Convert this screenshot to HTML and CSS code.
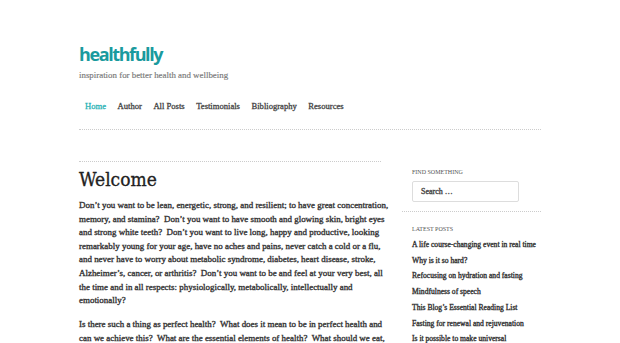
FILE: index.html
```html
<!DOCTYPE html>
<html>
<head>
<meta charset="utf-8">
<link rel="stylesheet" href="styles.css">
</head>
<body>
<div class="page">
  <header class="masthead">
    <div class="site-title">healthfully</div>
    <div class="tagline">inspiration for better health and wellbeing</div>
    <nav class="nav">
      <a class="current">Home</a>
      <a>Author</a>
      <a>All Posts</a>
      <a>Testimonials</a>
      <a>Bibliography</a>
      <a>Resources</a>
    </nav>
  </header>
  <div class="columns">
    <main class="main">
      <h1 class="entry-title">Welcome</h1>
      <p>Don’t you want to be lean, energetic, strong, and resilient; to have great concentration,<br>memory, and stamina?&nbsp; Don’t you want to have smooth and glowing skin, bright eyes<br>and strong white teeth?&nbsp; Don’t you want to live long, happy and productive, looking<br>remarkably young for your age, have no aches and pains, never catch a cold or a flu,<br>and never have to worry about metabolic syndrome, diabetes, heart disease, stroke,<br>Alzheimer’s, cancer, or arthritis?&nbsp; Don’t you want to be and feel at your very best, all<br>the time and in all respects: physiologically, metabolically, intellectually and<br>emotionally?</p>
      <p>Is there such a thing as perfect health?&nbsp; What does it mean to be in perfect health and<br>can we achieve this?&nbsp; What are the essential elements of health?&nbsp; What should we eat,</p>
    </main>
    <aside class="sidebar">
      <section class="widget">
        <h2 class="widget-title">Find Something</h2>
        <div class="search">Search …</div>
      </section>
      <section class="widget">
        <h2 class="widget-title">Latest Posts</h2>
        <ul class="posts">
          <li>A life course-changing event in real time</li>
          <li>Why is it so hard?</li>
          <li>Refocusing on hydration and fasting</li>
          <li>Mindfulness of speech</li>
          <li>This Blog’s Essential Reading List</li>
          <li>Fasting for renewal and rejuvenation</li>
          <li>Is it possible to make universal</li>
        </ul>
      </section>
    </aside>
  </div>
</div>
</body>
</html>
```

FILE: styles.css
```css
html, body {
  margin: 0;
  padding: 0;
  background: #fff;
}
body {
  font-family: "Liberation Serif", "Times New Roman", serif;
  color: #333;
  overflow: hidden;
  height: 343px;
}
.page {
  width: 462px;
  margin-left: 79px;
}
.masthead {
  padding-top: 42px;
  border-bottom: 1px dotted #ccc;
  padding-bottom: 17px;
}
.site-title {
  font-family: "Open Sans", sans-serif;
  font-weight: 700;
  font-size: 18px;
  line-height: 24px;
  color: #1a9a9e;
  letter-spacing: -1.4px;
}
.tagline {
  margin-top: 3px;
  font-size: 8.9px;
  line-height: 12px;
  color: #777;
  -webkit-text-stroke: 0.15px #777;
}
.nav {
  display: flex;
  gap: 11.5px;
  margin-top: 19px;
  padding-left: 6px;
  font-size: 8.6px;
  line-height: 12px;
  -webkit-text-stroke: 0.3px #444;
}
.nav a {
  color: #444;
}
.nav a.current {
  color: #2bb3b6;
  -webkit-text-stroke: 0.3px #2bb3b6;
}
.columns {
  display: flex;
  gap: 21px;
  margin-top: 31px;
}
.main {
  width: 302px;
  border-top: 1px dotted #ccc;
}
.entry-title {
  font-family: "DejaVu Serif Condensed", "DejaVu Serif", serif;
  font-weight: 400;
  font-size: 19px;
  line-height: 24px;
  margin: 5px 0 8px;
  color: #222;
  -webkit-text-stroke: 0.3px #222;
}
.main p {
  margin: 0 0 10.4px;
  font-size: 8.95px;
  line-height: 13.6px;
  color: #333;
  white-space: nowrap;
  -webkit-text-stroke: 0.35px #333;
}
.sidebar {
  width: 139px;
}
.widget {
  padding-left: 10px;
}
.widget + .widget {
  border-top: 1px dotted #ccc;
  margin-top: 9px;
}
.widget-title {
  margin: 6px 0 0;
  font-size: 6px;
  line-height: 10px;
  font-weight: 400;
  text-transform: uppercase;
  color: #555;
}
.search {
  margin-top: 4px;
  width: 97px;
  height: 19px;
  border: 1px solid #ddd;
  border-radius: 2px;
  padding-left: 8px;
  font-size: 8px;
  line-height: 19px;
  color: #444;
  -webkit-text-stroke: 0.35px #444;
}
.posts {
  list-style: none;
  margin: 3px 0 0;
  padding: 0;
}
.posts li {
  font-size: 7.6px;
  line-height: 15.7px;
  color: #333;
  -webkit-text-stroke: 0.35px #333;
}
.widget + .widget .widget-title {
  margin-top: 12px;
}
```
